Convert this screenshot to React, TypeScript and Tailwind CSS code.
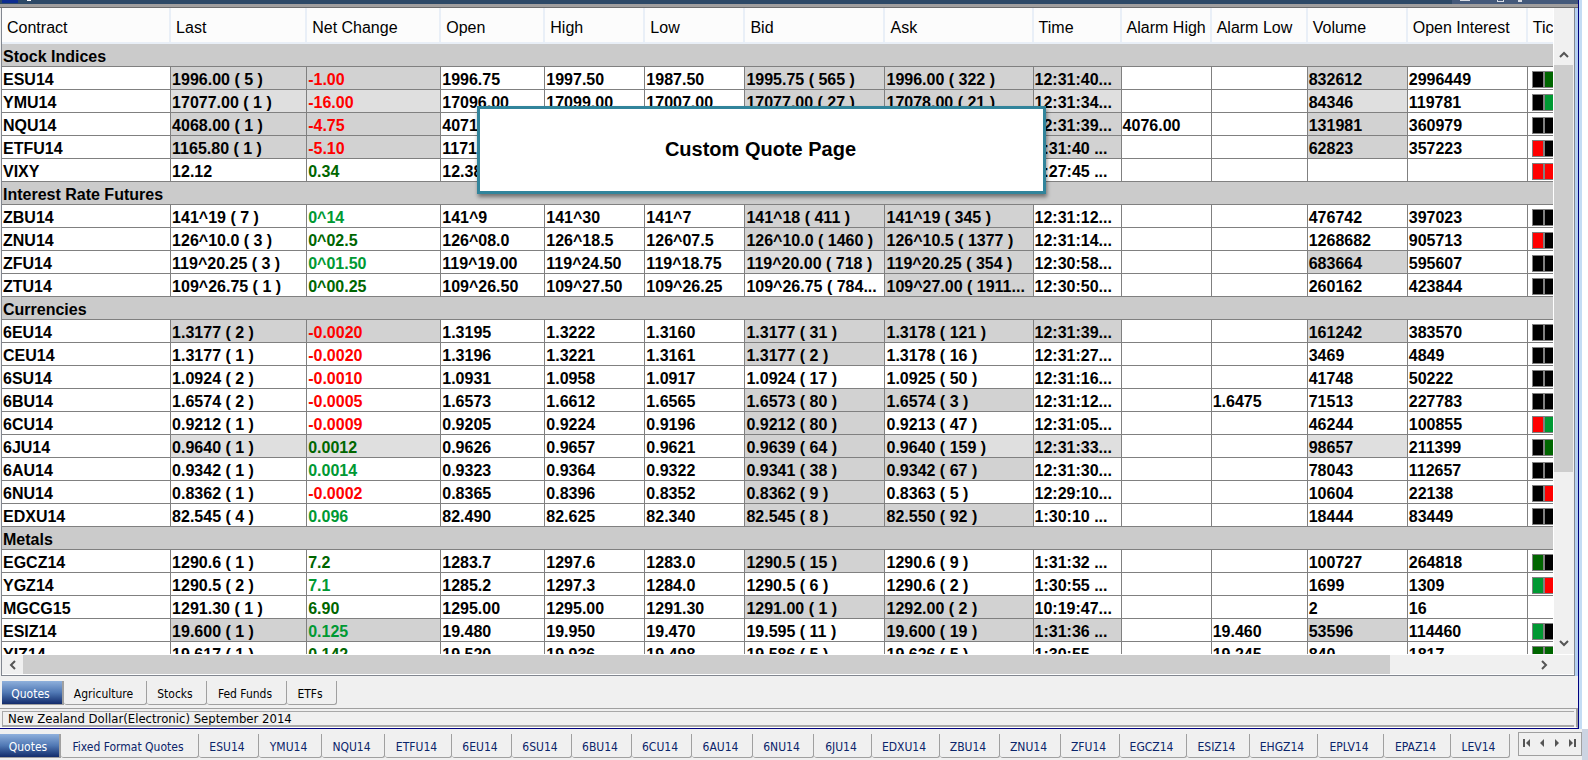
import React, { useState } from 'react';
import { clsx } from 'clsx';

type Tone = 'up' | 'rise' | 'down';

interface Quote {
  contract: string;
  last: string;
  net: string;
  tone: Tone;
  open: string;
  high: string;
  low: string;
  bid: string;
  ask: string;
  time: string;
  alarmHigh?: string;
  alarmLow?: string;
  volume: string;
  interest: string;
  ticks: string;
  // columns that just changed: L last, N net, B bid, A ask, T time, V volume (lower case = fading)
  hot: string;
}

interface Section {
  name: string;
  quotes: Quote[];
}

const q = (
  contract: string, last: string, net: string, tone: Tone, open: string, high: string, low: string,
  bid: string, ask: string, time: string, volume: string, interest: string, ticks: string, hot = '',
  alarmHigh = '', alarmLow = ''
): Quote => ({ contract, last, net, tone, open, high, low, bid, ask, time, volume, interest, ticks, hot, alarmHigh, alarmLow });

const SECTIONS: Section[] = [
  {
    name: 'Stock Indices',
    quotes: [
      q('ESU14', '1996.00 ( 5 )', '-1.00', 'down', '1996.75', '1997.50', '1987.50', '1995.75 ( 565 )', '1996.00 ( 322 )', '12:31:40...', '832612', '2996449', 'kd', 'LNBATV'),
      q('YMU14', '17077.00 ( 1 )', '-16.00', 'down', '17096.00', '17099.00', '17007.00', '17077.00 ( 27 )', '17078.00 ( 21 )', '12:31:34...', '84346', '119781', 'kg', 'lnBAtv'),
      q('NQU14', '4068.00 ( 1 )', '-4.75', 'down', '4071', '', '', '', '', '12:31:39...', '131981', '360979', 'kk', 'LNBATV', '4076.00'),
      q('ETFU14', '1165.80 ( 1 )', '-5.10', 'down', '1171', '', '', '', '', '1:31:40 ...', '62823', '357223', 'rk', 'LNBATV'),
      q('VIXY', '12.12', '0.34', 'up', '12.38', '', '', '', '', '1:27:45 ...', '', '', 'rr'),
    ],
  },
  {
    name: 'Interest Rate Futures',
    quotes: [
      q('ZBU14', '141^19 ( 7 )', '0^14', 'rise', '141^9', '141^30', '141^7', '141^18 ( 411 )', '141^19 ( 345 )', '12:31:12...', '476742', '397023', 'kk', 'BA'),
      q('ZNU14', '126^10.0 ( 3 )', '0^02.5', 'up', '126^08.0', '126^18.5', '126^07.5', '126^10.0 ( 1460 )', '126^10.5 ( 1377 )', '12:31:14...', '1268682', '905713', 'rk', 'BA'),
      q('ZFU14', '119^20.25 ( 3 )', '0^01.50', 'rise', '119^19.00', '119^24.50', '119^18.75', '119^20.00 ( 718 )', '119^20.25 ( 354 )', '12:30:58...', '683664', '595607', 'kk', 'bAV'),
      q('ZTU14', '109^26.75 ( 1 )', '0^00.25', 'up', '109^26.50', '109^27.50', '109^26.25', '109^26.75 ( 784...', '109^27.00 ( 1911...', '12:30:50...', '260162', '423844', 'kk', 'A'),
    ],
  },
  {
    name: 'Currencies',
    quotes: [
      q('6EU14', '1.3177 ( 2 )', '-0.0020', 'down', '1.3195', '1.3222', '1.3160', '1.3177 ( 31 )', '1.3178 ( 121 )', '12:31:39...', '161242', '383570', 'kk', 'LNBATV'),
      q('CEU14', '1.3177 ( 1 )', '-0.0020', 'down', '1.3196', '1.3221', '1.3161', '1.3177 ( 2 )', '1.3178 ( 16 )', '12:31:27...', '3469', '4849', 'kk', 'B'),
      q('6SU14', '1.0924 ( 2 )', '-0.0010', 'down', '1.0931', '1.0958', '1.0917', '1.0924 ( 17 )', '1.0925 ( 50 )', '12:31:16...', '41748', '50222', 'kk'),
      q('6BU14', '1.6574 ( 2 )', '-0.0005', 'down', '1.6573', '1.6612', '1.6565', '1.6573 ( 80 )', '1.6574 ( 3 )', '12:31:12...', '71513', '227783', 'kk', 'BA', '', '1.6475'),
      q('6CU14', '0.9212 ( 1 )', '-0.0009', 'down', '0.9205', '0.9224', '0.9196', '0.9212 ( 80 )', '0.9213 ( 47 )', '12:31:05...', '46244', '100855', 'rg', 'B'),
      q('6JU14', '0.9640 ( 1 )', '0.0012', 'up', '0.9626', '0.9657', '0.9621', '0.9639 ( 64 )', '0.9640 ( 159 )', '12:31:33...', '98657', '211399', 'kd', 'lnBatv'),
      q('6AU14', '0.9342 ( 1 )', '0.0014', 'rise', '0.9323', '0.9364', '0.9322', '0.9341 ( 38 )', '0.9342 ( 67 )', '12:31:30...', '78043', '112657', 'kk', 'BA'),
      q('6NU14', '0.8362 ( 1 )', '-0.0002', 'down', '0.8365', '0.8396', '0.8352', '0.8362 ( 9 )', '0.8363 ( 5 )', '12:29:10...', '10604', '22138', 'kr', 'B'),
      q('EDXU14', '82.545 ( 4 )', '0.096', 'rise', '82.490', '82.625', '82.340', '82.545 ( 8 )', '82.550 ( 92 )', '1:30:10 ...', '18444', '83449', 'kk', 'BA'),
    ],
  },
  {
    name: 'Metals',
    quotes: [
      q('EGCZ14', '1290.6 ( 1 )', '7.2', 'up', '1283.7', '1297.6', '1283.0', '1290.5 ( 15 )', '1290.6 ( 9 )', '1:31:32 ...', '100727', '264818', 'dk', 'B'),
      q('YGZ14', '1290.5 ( 2 )', '7.1', 'rise', '1285.2', '1297.3', '1284.0', '1290.5 ( 6 )', '1290.6 ( 2 )', '1:30:55 ...', '1699', '1309', 'gr'),
      q('MGCG15', '1291.30 ( 1 )', '6.90', 'up', '1295.00', '1295.00', '1291.30', '1291.00 ( 1 )', '1292.00 ( 2 )', '10:19:47...', '2', '16', '', 'BA'),
      q('ESIZ14', '19.600 ( 1 )', '0.125', 'rise', '19.480', '19.950', '19.470', '19.595 ( 11 )', '19.600 ( 19 )', '1:31:36 ...', '53596', '114460', 'gk', 'LNATV', '', '19.460'),
      q('YIZ14', '19.617 ( 1 )', '0.142', 'up', '19.520', '19.936', '19.498', '19.586 ( 5 )', '19.626 ( 5 )', '1:30:55 ...', '840', '1817', 'dd', '', '', '19.245'),
    ],
  },
];

const COLUMNS = [
  { label: 'Contract', width: 'w-[169px]' },
  { label: 'Last', width: 'w-[136px]' },
  { label: 'Net Change', width: 'w-[134px]' },
  { label: 'Open', width: 'w-[104px]' },
  { label: 'High', width: 'w-[100px]' },
  { label: 'Low', width: 'w-[100px]' },
  { label: 'Bid', width: 'w-[140px]' },
  { label: 'Ask', width: 'w-[148px]' },
  { label: 'Time', width: 'w-[88px]' },
  { label: 'Alarm High', width: 'w-[90px]' },
  { label: 'Alarm Low', width: 'w-[96px]' },
  { label: 'Volume', width: 'w-[100px]' },
  { label: 'Open Interest', width: 'w-[120px]' },
  { label: 'Tick', width: 'w-[120px]' },
];

const TONES: Record<Tone, string> = {
  up: 'text-[#006600]',
  rise: 'text-[#009933]',
  down: 'text-[#ff0000]',
};

const TICKS: Record<string, string> = {
  k: 'bg-black',
  r: 'bg-[#ff0000]',
  g: 'bg-[#009933]',
  d: 'bg-[#006600]',
};

const PAGE_TABS = [
  { label: 'Quotes', width: 'w-[62px]' },
  { label: 'Agriculture', width: 'w-[83px]' },
  { label: 'Stocks', width: 'w-[60px]' },
  { label: 'Fed Funds', width: 'w-[80px]' },
  { label: 'ETFs', width: 'w-[50px]' },
];

const SHEET_TABS = [
  { label: 'Quotes', width: 'w-[61px]' },
  { label: 'Fixed Format Quotes', width: 'w-[138px]' },
  { label: 'ESU14', width: 'w-[60px]' },
  { label: 'YMU14', width: 'w-[63px]' },
  { label: 'NQU14', width: 'w-[63px]' },
  { label: 'ETFU14', width: 'w-[67px]' },
  { label: '6EU14', width: 'w-[60px]' },
  { label: '6SU14', width: 'w-[60px]' },
  { label: '6BU14', width: 'w-[60px]' },
  { label: '6CU14', width: 'w-[60px]' },
  { label: '6AU14', width: 'w-[61px]' },
  { label: '6NU14', width: 'w-[61px]' },
  { label: '6JU14', width: 'w-[58px]' },
  { label: 'EDXU14', width: 'w-[68px]' },
  { label: 'ZBU14', width: 'w-[60px]' },
  { label: 'ZNU14', width: 'w-[61px]' },
  { label: 'ZFU14', width: 'w-[59px]' },
  { label: 'EGCZ14', width: 'w-[67px]' },
  { label: 'ESIZ14', width: 'w-[63px]' },
  { label: 'EHGZ14', width: 'w-[68px]' },
  { label: 'EPLV14', width: 'w-[66px]' },
  { label: 'EPAZ14', width: 'w-[67px]' },
  { label: 'LEV14', width: 'w-[59px]' },
];

interface CellProps {
  children?: React.ReactNode;
  hot?: string;
  mark?: string;
  className?: string;
}

const Cell: React.FC<CellProps> = ({ children, hot = '', mark = '', className }) => {
  const lit = mark !== '' && hot.includes(mark);
  const fading = mark !== '' && hot.includes(mark.toLowerCase());
  return (
    <td
      className={clsx(
        'h-[23px] border-r border-b border-[#808080] pt-1 pl-px align-top leading-[18px] whitespace-nowrap',
        lit && 'bg-[#d2d2d2]',
        fading && 'bg-[#dfdfdf]',
        className
      )}
    >
      {children}
    </td>
  );
};

const QuoteRow: React.FC<{ quote: Quote }> = ({ quote }) => (
  <tr>
    <Cell>{quote.contract}</Cell>
    <Cell hot={quote.hot} mark="L">{quote.last}</Cell>
    <Cell hot={quote.hot} mark="N" className={TONES[quote.tone]}>{quote.net}</Cell>
    <Cell>{quote.open}</Cell>
    <Cell>{quote.high}</Cell>
    <Cell>{quote.low}</Cell>
    <Cell hot={quote.hot} mark="B">{quote.bid}</Cell>
    <Cell hot={quote.hot} mark="A">{quote.ask}</Cell>
    <Cell hot={quote.hot} mark="T">{quote.time}</Cell>
    <Cell>{quote.alarmHigh}</Cell>
    <Cell>{quote.alarmLow}</Cell>
    <Cell hot={quote.hot} mark="V">{quote.volume}</Cell>
    <Cell>{quote.interest}</Cell>
    <Cell>
      {quote.ticks && (
        <div className="ml-[3px] flex h-[17px] w-max gap-[2px] bg-[#808080] p-px">
          {quote.ticks.split('').map((t, i) => (
            <span key={i} className={clsx('w-[10px]', TICKS[t])} />
          ))}
        </div>
      )}
    </Cell>
  </tr>
);

interface TabsProps {
  tabs: { label: string; width: string }[];
  ink: string;
}

const Tabs: React.FC<TabsProps> = ({ tabs, ink }) => {
  const [active, setActive] = useState(0);
  return (
    <div role="tablist" className="flex h-6 min-w-0 overflow-hidden">
      {tabs.map((tab, i) => (
        <button
          key={tab.label}
          type="button"
          role="tab"
          aria-selected={i === active}
          onClick={() => setActive(i)}
          className={clsx(
            'shrink-0 whitespace-nowrap border-r border-b pt-[2px] pr-[3px] text-center',
            tab.width,
            i === active
              ? 'border-r-2 border-[#a0a0a0] bg-linear-to-b from-[#8fb0dc] via-[#5078b4] to-[#142c6c] text-white'
              : 'rounded-b-[3px] border-[#a0a0a0]',
            i !== active && ink
          )}
        >
          {tab.label}
        </button>
      ))}
    </div>
  );
};

const Arrow: React.FC<{ d: string; label: string; className?: string }> = ({ d, label, className }) => (
  <button type="button" aria-label={label} className={clsx('flex shrink-0 items-center justify-center', className)}>
    <svg width="10" height="10" viewBox="0 0 10 10" fill="none" stroke="#555" strokeWidth="2">
      <path d={d} />
    </svg>
  </button>
);

const NavButton: React.FC<{ label: string; points: string; bar?: number }> = ({ label, points, bar }) => (
  <button type="button" aria-label={label} className="flex items-center justify-center">
    <svg width="8" height="8" viewBox="0 0 8 8" fill="#555">
      <polygon points={points} />
      {bar !== undefined && <rect x={bar} y="0" width="2" height="8" />}
    </svg>
  </button>
);

const TitleBar = () => (
  <div className="h-2 shrink-0 border-b border-[#6c6c6c] bg-[#a09e9e]">
    <div className="flex h-1 items-start bg-[#2c4866] pl-[2px]">
      <span className="h-[3px] w-4 bg-[#0c2c90]" />
      <span className="ml-[9px] h-px w-1 bg-white" />
      <div className="ml-auto flex h-1 w-[126px] items-start bg-[#44597a] pl-2">
        <span className="h-px w-[10px] bg-[#d8dce4]" />
        <span className="ml-[27px] h-[2px] w-[7px] border-x border-b border-[#d8dce4]" />
        <span className="ml-[14px] h-[2px] w-1 bg-[#d8dce4]" />
      </div>
    </div>
  </div>
);

const QuoteTable = () => (
  <div className="min-h-0 min-w-0 flex-1 overflow-hidden bg-white">
    <table className="w-[1646px] table-fixed border-separate border-spacing-0 text-base">
      <thead>
        <tr>
          {COLUMNS.map((col) => (
            <th
              key={col.label}
              scope="col"
              className={clsx(
                'h-9 border-r-2 border-b-2 border-[#e9eff7] bg-[#fcfcfc] pt-[10px] pl-[5px] text-left align-top leading-5 font-normal whitespace-nowrap',
                col.width
              )}
            >
              {col.label}
            </th>
          ))}
        </tr>
      </thead>
      {SECTIONS.map((section) => (
        <tbody key={section.name} className="font-bold">
          <tr>
            <th
              scope="rowgroup"
              colSpan={COLUMNS.length}
              className="h-[23px] border-b border-[#808080] bg-[#cbcbcb] pt-1 pl-px text-left align-top leading-[18px]"
            >
              {section.name}
            </th>
          </tr>
          {section.quotes.map((quote) => (
            <QuoteRow key={quote.contract} quote={quote} />
          ))}
        </tbody>
      ))}
    </table>
  </div>
);

export default function App() {
  return (
    <div className="flex h-screen flex-col overflow-hidden bg-[#f0f0f0] font-['Liberation_Sans',Arial,sans-serif] text-black">
      <div className="flex min-h-0 flex-1 bg-white">
        <div className="relative flex min-w-0 flex-1 flex-col border-r border-b border-[#000080] bg-[#f0f0f0]">
          <TitleBar />
          <main className="flex min-h-0 flex-1 border-r-3 border-[#b4d0f0] pl-px">
            <div className="flex min-w-0 flex-1 flex-col border-x border-b border-[#828790]">
              <div className="flex min-h-0 flex-1">
                <QuoteTable />
                <div className="flex w-[21px] shrink-0 flex-col border-l border-white pt-9">
                  <Arrow d="M1 7 5 3 9 7" label="Scroll up" className="h-[21px]" />
                  <div className="mr-px flex-[407] bg-[#cdcdcd]" />
                  <div className="flex-[160]" />
                  <Arrow d="M1 3 5 7 9 3" label="Scroll down" className="h-[22px]" />
                </div>
              </div>
              <div className="flex h-[21px] shrink-0 border-y border-white pr-5">
                <Arrow d="M7 1 3 5 7 9" label="Scroll left" className="w-[21px]" />
                <div className="flex-[1366] bg-[#cdcdcd]" />
                <div className="flex-[143]" />
                <Arrow d="M3 1 7 5 3 9" label="Scroll right" className="w-[21px]" />
              </div>
            </div>
          </main>
          <div className="h-8 shrink-0 pt-[5px] pl-[2px] font-['DejaVu_Sans_Condensed','DejaVu_Sans',sans-serif] text-xs">
            <Tabs tabs={PAGE_TABS} ink="text-black" />
          </div>
          <div className="h-5 shrink-0 border-t border-r-2 border-b border-t-[#a0a0a0] border-r-[#a0a0a0] border-b-white pt-[2px] pr-[2px] pl-[2px]">
            <div className="h-4 overflow-hidden border-t border-b-2 border-l border-[#a8a8a8] pl-[5px] font-['DejaVu_Sans_Condensed','DejaVu_Sans',sans-serif] text-[13px] leading-[14px]">
              New Zealand Dollar(Electronic) September 2014
            </div>
          </div>

          <div className="absolute top-[106px] left-[477px] flex h-[88px] w-[569px] items-center justify-center border-3 border-[#31849b] bg-white pr-[2px] pb-[2px] text-xl font-bold shadow-[1px_3px_4px_rgba(0,0,0,0.45)]">
            Custom Quote Page
          </div>
        </div>
        <div className="w-[9px] shrink-0 border-l-3 border-[#c4dcf4]" />
      </div>

      <div className="flex h-[31px] shrink-0 font-['DejaVu_Sans_Condensed','DejaVu_Sans',sans-serif] text-xs">
        <div className="min-w-0 flex-1 pt-[5px]">
          <Tabs tabs={SHEET_TABS} ink="text-[#0a246a]" />
        </div>
        <div className="mt-[3px] grid h-6 w-16 shrink-0 grid-cols-4 border border-[#a0a0a0] pr-px pb-[2px]">
          <NavButton label="First sheet" points="7,0 7,8 3,4" bar={0} />
          <NavButton label="Previous sheet" points="6,0 6,8 2,4" />
          <NavButton label="Next sheet" points="2,0 2,8 6,4" />
          <NavButton label="Last sheet" points="1,0 1,8 5,4" bar={6} />
        </div>
        <div className="w-[6px] shrink-0 bg-[#ccd4e2]" />
      </div>
    </div>
  );
}
